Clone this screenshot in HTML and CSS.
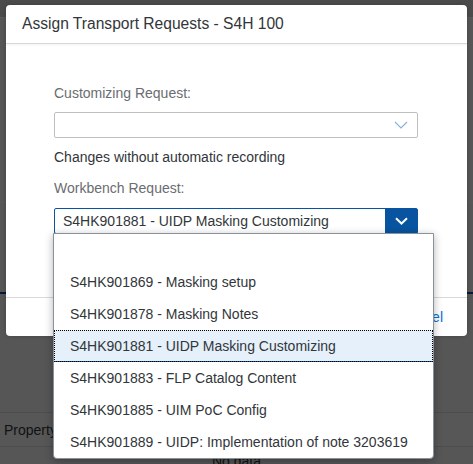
FILE: index.html
```html
<!DOCTYPE html>
<html>
<head>
<meta charset="utf-8">
<link rel="stylesheet" href="styles.css">
</head>
<body>
<div class="page">
  <div class="shell"></div>
  <div class="page-body">
    <div class="toolbar-line"></div>
    <div class="tab-line"></div>
    <div class="table">
      <div class="table-head"><span>Property</span></div>
      <div class="table-empty">No data</div>
    </div>
  </div>
</div>
<div class="overlay"></div>

<div class="dialog">
  <header class="dialog-header">Assign Transport Requests - S4H 100</header>
  <section class="dialog-content">
    <label class="field-label">Customizing Request:</label>
    <div class="combo">
      <div class="combo-text"></div>
      <span class="combo-arrow">
        <svg width="14" height="8" viewBox="0 0 14 8"><polyline points="1,1 7,7 13,1" fill="none" stroke="#8cb2da" stroke-width="1.2"/></svg>
      </span>
    </div>
    <div class="hint">Changes without automatic recording</div>
    <label class="field-label">Workbench Request:</label>
    <div class="combo combo-focus">
      <div class="combo-text">S4HK901881 - UIDP Masking Customizing</div>
      <span class="combo-arrow combo-arrow-active">
        <svg width="13" height="8" viewBox="0 0 13 8"><polyline points="1,1.2 6.5,6.5 12,1.2" fill="none" stroke="#ffffff" stroke-width="2"/></svg>
      </span>
    </div>
  </section>
  <footer class="dialog-footer">
    <button class="btn">Assign</button>
    <button class="btn">Cancel</button>
  </footer>
</div>

<ul class="popover-list">
  <li class="item"></li>
  <li class="item">S4HK901869 - Masking setup</li>
  <li class="item">S4HK901878 - Masking Notes</li>
  <li class="item item-selected">S4HK901881 - UIDP Masking Customizing</li>
  <li class="item">S4HK901883 - FLP Catalog Content</li>
  <li class="item">S4HK901885 - UIM PoC Config</li>
  <li class="item">S4HK901889 - UIDP: Implementation of note 3203619</li>
</ul>
</body>
</html>
```

FILE: styles.css
```css
* { box-sizing: border-box; }
html, body { margin: 0; padding: 0; }
body {
  width: 473px;
  height: 464px;
  overflow: hidden;
  position: relative;
  font-family: "Liberation Sans", Arial, sans-serif;
  color: #32363a;
  background: #f7f7f7;
}

/* page behind the dialog */
.page { height: 464px; overflow: hidden; }
.shell { height: 18px; background: #d8d8d8; border-bottom: 1px solid #ffffff; }
.page-body { display: flow-root; }
.toolbar-line { margin-top: 184px; height: 1px; background: #ffffff; }
.tab-line { margin-top: 89px; height: 2px; background: #0a4b8f; }
.table { margin-top: 118px; }
.table-head {
  height: 35px;
  border-top: 1px solid #dcdcdc;
  border-bottom: 1px solid #dcdcdc;
  display: flex;
  align-items: center;
  padding-left: 4px;
  font-size: 14px;
  color: #32363a;
  background: #fafafa;
}
.table-empty { text-align: center; font-size: 14px; padding-top: 6px; }
.overlay {
  position: absolute;
  inset: 0;
  background: rgba(0, 0, 0, 0.65);
}

/* dialog */
.dialog {
  position: absolute;
  left: 6px;
  top: 5px;
  width: 461px;
  height: 331px;
  background: #ffffff;
  border-radius: 4px;
  box-shadow: 0 0 4px rgba(0,0,0,0.2);
  display: flex;
  flex-direction: column;
  overflow: hidden;
}
.dialog-header {
  height: 39px;
  flex: none;
  padding-left: 16px;
  display: flex;
  align-items: center;
  font-size: 15.6px;
  color: #32363a;
  border-bottom: 1px solid #d9d9d9;
  box-shadow: 0 1px 2px rgba(0,0,0,0.06);
}
.dialog-content {
  flex: 1;
  padding: 40px 49px 0 48px;
  display: flex;
  flex-direction: column;
}
.field-label {
  display: block;
  height: 18px;
  line-height: 18px;
  font-size: 14px;
  color: #6a6d70;
}
.combo {
  margin-top: 10px;
  height: 26px;
  border: 1px solid #bfbfbf;
  border-radius: 2px;
  display: flex;
  align-items: stretch;
}
.combo-text {
  flex: 1;
  padding-left: 8px;
  font-size: 14px;
  line-height: 24px;
  color: #32363a;
  white-space: nowrap;
}
.combo-arrow {
  width: 32px;
  display: flex;
  align-items: center;
  justify-content: center;
}
.combo-focus { border-color: #0854a0; margin-top: 11px; }
.combo-arrow-active { background: #0854a0; }
.hint {
  margin-top: 10px;
  height: 18px;
  line-height: 18px;
  font-size: 14px;
  color: #32363a;
  margin-bottom: 13px;
}
.dialog-footer {
  height: 39px;
  flex: none;
  border-top: 1px solid #d9d9d9;
  display: flex;
  justify-content: flex-end;
  align-items: center;
  padding-right: 16px;
  gap: 8px;
}
.btn {
  border: none;
  background: transparent;
  font-family: inherit;
  font-size: 14px;
  color: #0a6ed1;
  padding: 0 8px;
  height: 26px;
}

/* dropdown list */
.popover-list {
  position: absolute;
  left: 53px;
  top: 233px;
  width: 381px;
  margin: 0;
  padding: 0;
  list-style: none;
  background: #ffffff;
  border: 1px solid #89919a;
  border-radius: 0 0 4px 4px;
  box-shadow: 0 2px 8px rgba(0,0,0,0.3);
}
.item {
  height: 32px;
  line-height: 32px;
  padding-left: 16px;
  font-size: 14px;
  color: #32363a;
  white-space: nowrap;
}
.item-selected {
  background: #e5f0fa;
  outline: 1px dotted #000000;
  outline-offset: -1px;
  box-shadow: inset 0 -1px 0 #0854a0;
}
```
